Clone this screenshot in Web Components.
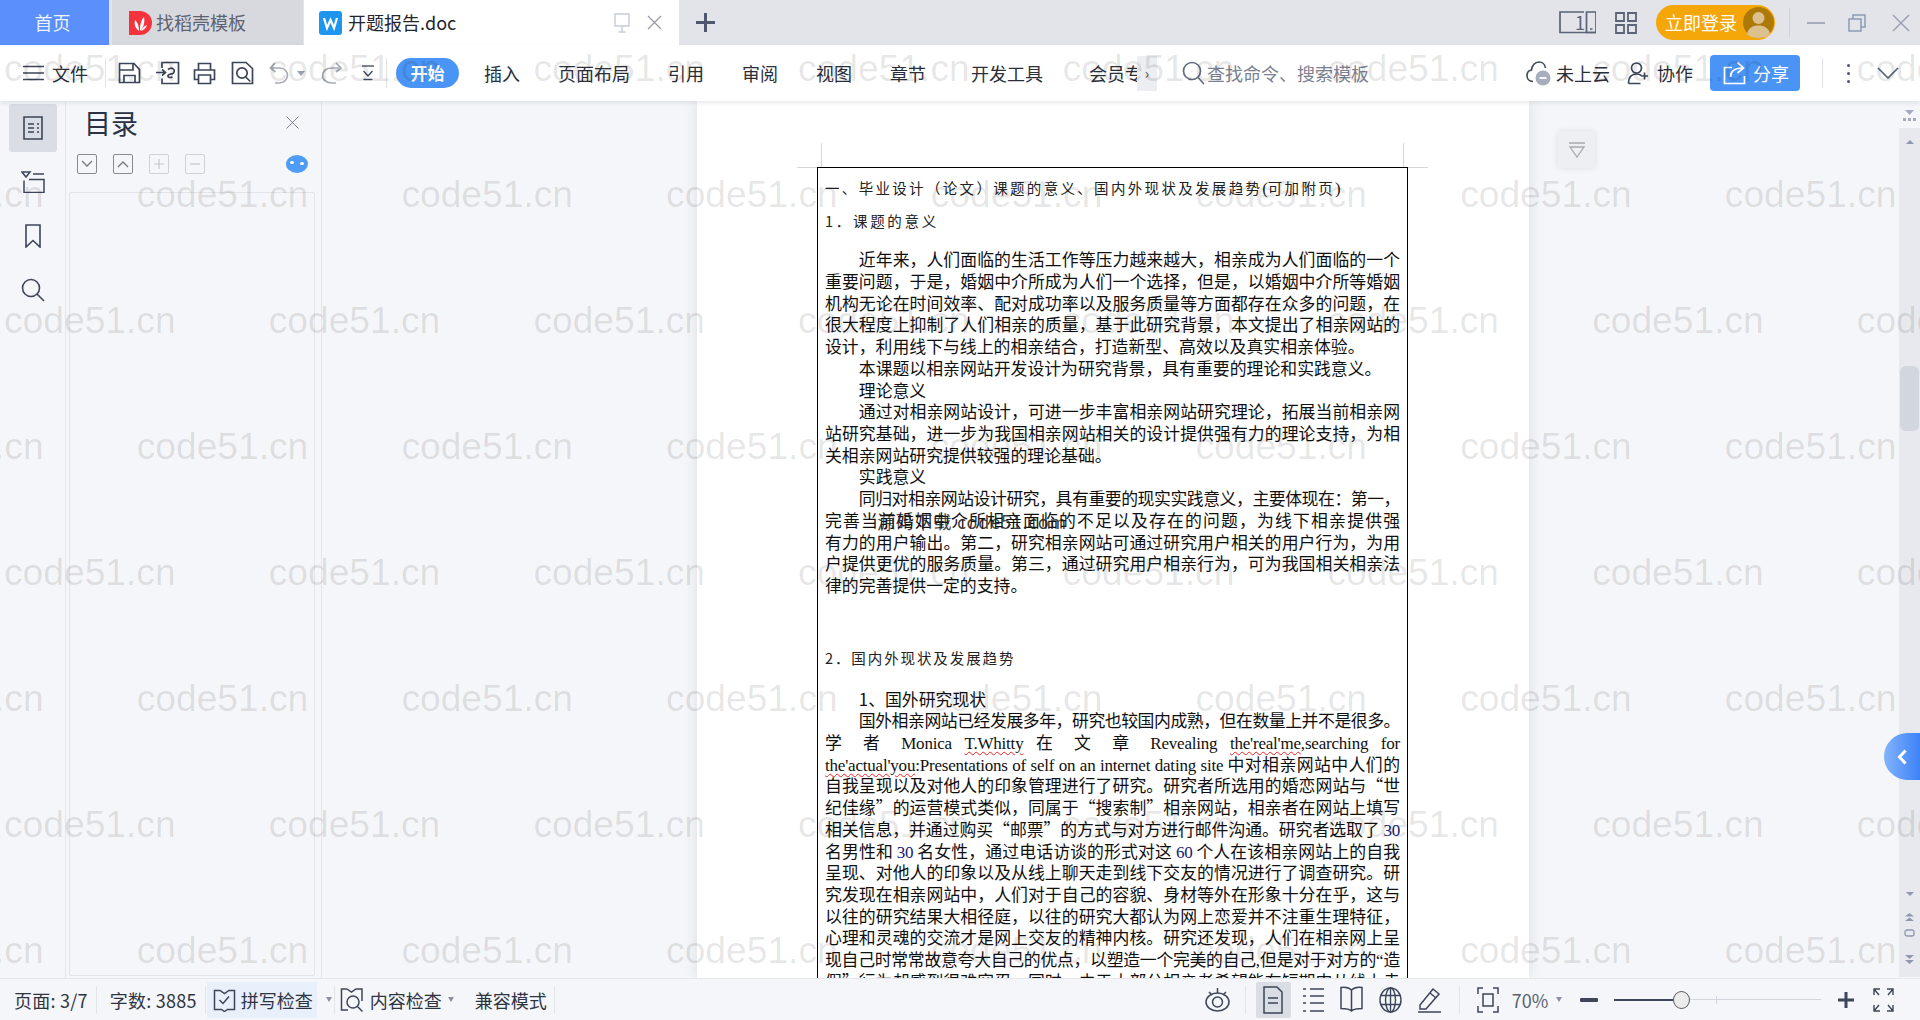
<!DOCTYPE html>
<html lang="zh-CN">
<head>
<meta charset="utf-8">
<title>开题报告.doc</title>
<style>
  html, body { margin: 0; height: 100%; }
  body {
    position: relative;
    width: 1920px;
    height: 1020px;
    overflow: hidden;
    display: flex;
    flex-direction: column;
    font-family: "Noto Sans CJK SC", "Noto Sans", sans-serif;
    color: #2b2f3a;
    background: #f5f6f9;
  }
</style>
</head>
<body>
<wps-titlebar></wps-titlebar>
<wps-ribbon></wps-ribbon>
<wps-main></wps-main>
<wps-status></wps-status>
<wps-watermark></wps-watermark>

<script>
const INK = "#3c4559";

// every icon is drawn in a box of its real size, w and h are taken from there
const ICONS = {
  save: [23, 24, `<path d="M1.5 2.5h14.5l5.500 6v13h-20z"/><path d="M1.500 9h13.500V2.500"/><path d="M6 21.500v-7h11v7"/>`],
  importDoc: [24, 24, `<path d="M6 7V1.500h16.500v21H6v-5"/><path d="M0 11.500h9M6 8.500l3.500 3-3.500 3"/><path d="M12 8.500c4-3.500 8 .5 5.500 3.500-1.500 1.800-5 .5-5.500 2.500-.5 2 2.500 2.500 4.500 1.500"/>`],
  print: [23, 23, `<path d="M5.500 8V1.500h12V8"/><path d="M5.500 17.500h-4V8h20v9.500h-4"/><path d="M5.500 13h12v8.500h-12z"/>`],
  preview: [23, 24, `<path d="M1.500 1.500h13.500l6.500 6v15h-20z"/><circle cx="11" cy="12" r="5.200"/><path d="M14.800 16l4.500 4.500"/>`],
  undo: [20, 24, `<path d="M6 2L1.500 7l5 4" stroke="#a8acb4"/><path d="M2 7h9c5 0 7.500 4 7.500 7.500S15 22 10 22H6" stroke="#a8acb4"/>`],
  redo: [22, 24, `<path d="M15 2l5 5-5 4" stroke="#a8acb4"/><path d="M20 7h-9C5 7 1.500 10.500 1.500 14.500S5 22 11 22h4" stroke="#a8acb4"/>`],
  more: [14, 18, `<path d="M1 2h12" stroke-width="1.300"/><path d="M2.500 7L7 12l4.500-5M2.500 15.500h9" stroke-width="1.300"/>`],
  menu: [21, 16, `<path d="M0 1.500h21M0 8h21M0 14.500h21" stroke-width="1.600"/>`],
  search: [23, 24, `<circle cx="10" cy="10" r="8.500" stroke="#656c7c"/><path d="M16 16.500l6 6.500" stroke="#656c7c"/>`],
  cloud: [25, 26, `<path d="M7 21.500C3 21.500 1 18.500 1 15.500c0-3 2-5 4.500-5.500C6 5.500 9 2 13 2c3 0 6 2.200 6.500 6" stroke-width="1.600"/><circle cx="17" cy="18" r="7.500" fill="#a6adbc" stroke="none"/><path d="M13.500 18h7" stroke="#fff" stroke-width="1.800"/>`],
  collab: [22, 24, `<circle cx="9.500" cy="7" r="5"/><path d="M1.500 22.500c0-6 3-9.500 8-9.500 2 0 3.500.5 4.800 1.500M1.500 22.500h12"/><path d="M17.500 11.500v7M14 15h7"/>`],
  share: [24, 24, `<path d="M9 6.500H1.500v16h20V15" stroke="#fff"/><path d="M7.500 16c0-5.500 4-9 12-9M14.500 1.500l6 5.500-6 5" stroke="#fff"/>`],
  chevron: [22, 12, `<path d="M1 1l10 10L21 1" stroke="#5b6271"/>`],
  device: [37, 23, `<path d="M25 1H1v20.500h36" /><path d="M27.500 1H37v20.500H27.500zM31 18h2.500"/>`],
  grid: [22, 22, `<path d="M1 1h8v8H1zM13 1h8v8h-8zM1 13h8v8H1zM13 13h8v8h-8z" stroke-width="1.800" stroke="#5a6377"/>`],
  minimize: [18, 2, `<path d="M0 1h18" stroke="#9aa1b4"/>`],
  restore: [18, 18, `<path d="M5 5V1h12v12h-4M1 5h12v12H1z" stroke="#8e9ab5" stroke-width="1.500"/>`],
  close: [20, 18, `<path d="M2 1l16 16M18 1L2 17" stroke="#9aa1b4" stroke-width="1.500"/>`],
  pin: [16, 20, `<path d="M1 1h14v12H1zM8 13v6M4.500 19h7" stroke="#c6cadb" stroke-width="1.400"/>`],
  tabClose: [15, 15, `<path d="M1 1l13 13M14 1L1 14" stroke="#959aa6" stroke-width="1.200"/>`],
  plus: [19, 19, `<path d="M9.500 0v19M0 9.500h19" stroke="#50586f" stroke-width="3"/>`],
  toc: [20, 24, `<path d="M1 1h18v22H1z" stroke-width="1.600"/><path d="M5 8h6M14 8h2M5 12h6M14 12h2M5 16h6M14 16h2" stroke-width="1.600"/>`],
  outline: [24, 22, `<path d="M1 1h8L5 6zM12 3h11M3 9.500v12h20V8.500H8" stroke-width="1.500"/>`],
  bookmark: [16, 24, `<path d="M1 1h14v22l-7-6.500L1 23z" stroke-width="1.600"/>`],
  find: [24, 24, `<circle cx="10" cy="10" r="8.500" stroke-width="1.600"/><path d="M16 16l7 7" stroke-width="1.600"/>`],
  panelClose: [13, 13, `<path d="M.5.5l12 12M12.500.5l-12 12" stroke="#5b6271" stroke-width=".8"/>`],
  spell: [23, 24, `<path d="M7 2.500H1.500v19h7l3 2 3-2h7v-19H16l-4.500 3z" stroke-width="1.500"/><path d="M6.500 12l3.500 3.500 6-7" stroke-width="1.500"/>`],
  content: [23, 26, `<path d="M7 2H1.500v21H8M22 14V2h-6l-4.500 3L7 2" stroke-width="1.500"/><circle cx="13" cy="15" r="6" stroke-width="1.500"/><path d="M17.500 19.500l5 5" stroke-width="1.500"/>`],
  eye: [25, 26, `<ellipse cx="12.500" cy="15" rx="11.500" ry="9" stroke-width="1.500"/><circle cx="12.500" cy="15" r="5" stroke-width="1.500"/><path d="M4 5l3 3M12.500 1v5M21 5l-3 3" stroke-width="1.500"/>`],
  page: [20, 28, `<path d="M1 1h13l5 5v21H1z" stroke-width="1.500"/><path d="M5 12h10M5 17h10" stroke-width="1.500"/>`],
  list: [21, 26, `<path d="M0 2h3M7 2h14M0 9h3M7 9h14M0 16h3M7 16h14M0 24h3M7 24h14" stroke-width="1.500"/>`],
  book: [23, 28, `<path d="M11.500 4C9 1.500 4 1 1 1.500v21c3 0 8 0 10.500 2.500 2.500-2.500 7.500-2.500 10.500-2.500v-21c-3-.5-8 0-10.500 2.500zM11.500 4v21" stroke-width="1.500"/>`],
  globe: [23, 26, `<ellipse cx="11.500" cy="13" rx="10.500" ry="12" stroke-width="1.400"/><ellipse cx="11.500" cy="13" rx="5" ry="12" stroke-width="1.400"/><path d="M11.500 1v24M1.500 8.500h20M1.500 17.500h20" stroke-width="1.400"/>`],
  pen: [23, 26, `<path d="M2 18L15 2l6 5L8 22H2z" stroke-width="1.500"/><path d="M12 6l6 5M0 25h23" stroke-width="1.500"/>`],
  fit: [22, 26, `<path d="M1 7V1h5M16 1h5v6M21 19v6h-5M6 25H1v-6" stroke-width="1.500"/><path d="M6 7h10v12H6z" stroke-width="1.500"/>`],
  fullscreen: [21, 24, `<path d="M1 7V1h6M1 1l5 6M14 1h6v6M20 1l-5 6M1 17v6h6M1 23l5-6M14 23h6v-6M20 23l-5-6" stroke-width="1.400"/>`],
};

function icon(name, color = INK) {
  const [w, h, body] = ICONS[name];
  return `<svg width="${w}" height="${h}" viewBox="0 0 ${w} ${h}" fill="none" stroke="${color}" stroke-width="1.700" style="display:block;flex:none">${body}</svg>`;
}

class WpsTitlebar extends HTMLElement {
  constructor() {
    super();
    this.attachShadow({ mode: "open" }).innerHTML = `
      <style>
        :host { display: flex; flex: none; height: 45px; background: #e3e4e9; font-size: 18px; line-height: 45px; }
        .tab { display: flex; align-items: center; box-sizing: border-box; height: 45px; }
        .home { width: 109px; justify-content: center; background: #5b8ffb; color: #eef3ff; padding-right: 4px; }
        .stock { width: 191px; margin-left: 3px; padding-left: 17px; gap: 4px; background: #d8d9de; color: #5d6270; }
        .doc { width: 375px; margin-left: 1px; padding-left: 15px; background: #fff; color: #23262e; }
        .doc .name { margin-left: 6px; }
        .doc .pin { margin-left: auto; }
        .doc .x { margin: 0 17px 0 17px; }
        .add { margin-left: 17px; display: flex; align-items: center; }
        .right { margin-left: auto; display: flex; align-items: center; }
        .device { position: relative; }
        .device b { position: absolute; left: 16px; top: 2px; font: 400 18px/18px "Noto Sans CJK SC", sans-serif; color: #5a6377; }
        .login {
          display: flex; align-items: center; box-sizing: border-box;
          width: 119px; height: 35px; margin-left: 19px; padding: 0 1px 0 9px;
          border-radius: 18px; background: #f5a609; color: #fff; font-size: 18px;
        }
        .login svg { margin-left: auto; }
        .sep { width: 1px; height: 29px; margin-left: 14px; background: #d0d2d8; }
      </style>
      <div class="tab home">首页</div>
      <div class="tab stock">
        <svg width="23" height="24" viewBox="0 0 23 24" style="flex:none"><path d="M0 0h11a12 12 0 0 1 0 24H0z" fill="#f4333c"/><path d="M10 20C6 17 5 13 6 9c2 2 4 5 4 11zM11 20c0-6 1-11 4-14 1 5 0 10-4 14zM12 20c1-3 3-5 6-6-1 3-3 5-6 6z" fill="#fff"/></svg>
        <span>找稻壳模板</span>
      </div>
      <div class="tab doc">
        <svg width="23" height="24" viewBox="0 0 23 24" style="flex:none"><rect width="23" height="24" rx="3" fill="#1e96f0"/><path d="M5 7l3 10 3.500-8 3.500 8 3-10" fill="none" stroke="#fff" stroke-width="2.200"/></svg>
        <span class="name">开题报告.doc</span>
        <span class="pin">${icon("pin")}</span>
        <span class="x">${icon("tabClose")}</span>
      </div>
      <div class="add">${icon("plus")}</div>
      <div class="right">
        <span class="device">${icon("device", "#5a6377")}<b>1</b></span>
        <span style="margin-left:19px">${icon("grid")}</span>
        <div class="login">
          <span>立即登录</span>
          <svg width="31" height="31" viewBox="0 0 31 31"><circle cx="15.500" cy="15.500" r="15.500" fill="#ad7a08"/><circle cx="15.500" cy="11" r="6" fill="#dcc08e"/><path d="M4 27c1-6 6-8.500 11.500-8.500S26 21 27 27c-3 3-7 4-11.500 4S7 30 4 27z" fill="#dcc08e"/></svg>
        </div>
        <span class="sep"></span>
        <span style="margin-left:17px">${icon("minimize")}</span>
        <span style="margin-left:23px">${icon("restore")}</span>
        <span style="margin:0 9px 0 25px">${icon("close")}</span>
      </div>`;
  }
}
customElements.define("wps-titlebar", WpsTitlebar);

class WpsRibbon extends HTMLElement {
  constructor() {
    super();
    const tabs = ["插入", "页面布局", "引用", "审阅", "视图", "章节"];
    this.attachShadow({ mode: "open" }).innerHTML = `
      <style>
        :host {
          display: flex; flex: none; align-items: center; height: 56px; position: relative; z-index: 2;
          background: #fff; color: #2b2f3a; font-size: 18px; box-shadow: 0 2px 5px rgba(0,0,0,.09);
        }
        .group { display: flex; align-items: center; }
        .sep { width: 1px; height: 30px; background: #e1e3e8; flex: none; }
        .caret { width: 0; height: 0; border: 4px solid transparent; border-top: 5px solid #9aa1ae; border-bottom: 0; margin-left: 8px; flex: none; }
        .start {
          width: 63px; height: 30px; margin-left: 9px; border-radius: 15px; background: #4a94f6;
          color: #fff; font-weight: 700; text-align: center; line-height: 29px; font-size: 17px; flex: none;
        }
        .tabs { gap: 38px; margin-left: 25px; white-space: nowrap; }
        .vip { width: 48px; overflow: hidden; white-space: nowrap; margin-left: 46px; }
        .strip { width: 20px; height: 35px; background: #eceef2; text-align: center; line-height: 33px; color: #555; flex: none; font-size: 15px; }
        .hint { color: #7b8191; margin-left: 2px; white-space: nowrap; }
        .share {
          display: flex; align-items: center; gap: 6px; box-sizing: border-box; width: 90px; height: 36px;
          margin-left: 17px; padding-left: 13px; border-radius: 4px; background: #4a94f6; color: #fff;
        }
        .dots { display: flex; flex-direction: column; gap: 5px; margin-left: 24px; }
        .dots i { width: 3px; height: 3px; border-radius: 50%; background: #4c5364; }
      </style>
      <span class="group" style="margin-left:23px">${icon("menu")}</span>
      <span style="margin-left:8px">文件</span>
      <span class="sep" style="margin-left:17px"></span>
      <span class="group" style="margin-left:12px;gap:15px">
        ${icon("save")}${icon("importDoc")}<span style="margin-left:-2px">${icon("print")}</span>${icon("preview")}
      </span>
      <span class="group" style="margin-left:15px">${icon("undo")}<i class="caret"></i></span>
      <span class="group" style="margin-left:16px">${icon("redo")}</span>
      <span class="group" style="margin-left:18px">${icon("more")}</span>
      <span class="sep" style="margin-left:11px"></span>
      <span class="start">开始</span>
      <span class="group tabs">
        ${tabs.map(t => `<span>${t}</span>`).join("")}
        <span style="margin-left:7px">开发工具</span>
      </span>
      <span class="vip">会员专享</span>
      <span class="strip">›</span>
      <span class="group" style="margin-left:25px">${icon("search")}</span>
      <span class="hint">查找命令、搜索模板</span>
      <span class="group" style="margin-left:157px">${icon("cloud")}</span>
      <span style="margin-left:5px;white-space:nowrap">未上云</span>
      <span class="group" style="margin-left:17px">${icon("collab")}</span>
      <span style="margin-left:8px">协作</span>
      <span class="share">${icon("share")}<span>分享</span></span>
      <span class="sep" style="margin-left:22px"></span>
      <span class="dots"><i></i><i></i><i></i></span>
      <span class="group" style="margin-left:27px">${icon("chevron")}</span>`;
  }
}
customElements.define("wps-ribbon", WpsRibbon);

class WpsSidebar extends HTMLElement {
  constructor() {
    super();
    this.attachShadow({ mode: "open" }).innerHTML = `
      <style>
        :host { display: flex; flex: none; height: 100%; background: #f5f6f9; }
        .rail { width: 65px; border-right: 1px solid #e4e6ea; display: flex; flex-direction: column; align-items: center; padding-top: 3px; }
        .rail span { display: flex; align-items: center; justify-content: center; width: 48px; height: 48px; margin-bottom: 6px; border-radius: 3px; }
        .rail span.on { background: #dadde3; }
        .panel { box-sizing: border-box; width: 256px; border-right: 1px solid #e4e6ea; padding: 0 6px 0 3px; display: flex; flex-direction: column; }
        .head { display: flex; align-items: center; justify-content: space-between; height: 47px; padding: 0 16px 4px 15px; box-sizing: border-box; }
        h1 { margin: 0; font-size: 27px; font-weight: 400; color: #2b3245; line-height: 40px; }
        .tools { display: flex; align-items: center; gap: 16px; height: 20px; margin: 6px 0 0 8px; }
        .tools b { box-sizing: border-box; width: 20px; height: 20px; border: 1.500px solid #8a8a8a; border-radius: 2px; display: flex; align-items: center; justify-content: center; }
        .tools b.off { border-color: #d0d1d4; }
        .pill { margin-left: 65px; width: 22px; height: 18px; border-radius: 50%; background: #4d9cf5; position: relative; }
        .pill::before, .pill::after { content: ""; position: absolute; top: 6px; width: 4px; height: 3px; background: #fff; border-radius: 50%; }
        .pill::before { left: 4px; }
        .pill::after { right: 4px; top: 7px; }
        .list { flex: 1; margin: 18px 0 2px; border: 1px solid #e3e5e9; border-radius: 2px; }
      </style>
      <div class="rail">
        <span class="on">${icon("toc")}</span>
        ${`<span>${icon("outline")}</span><span>${icon("bookmark")}</span><span>${icon("find")}</span>`}
      </div>
      <div class="panel">
        <div class="head"><h1>目录</h1>${icon("panelClose")}</div>
        <div class="tools">
          <b><svg width="12" height="8" viewBox="0 0 12 8" fill="none" stroke="#777" stroke-width="1.300"><path d="M1 1l5 5 5-5"/></svg></b>
          <b><svg width="12" height="8" viewBox="0 0 12 8" fill="none" stroke="#777" stroke-width="1.300"><path d="M1 7l5-5 5 5"/></svg></b>
          <b class="off"><svg width="10" height="10" viewBox="0 0 10 10" fill="none" stroke="#c6c7ca" stroke-width="1.200"><path d="M5 0v10M0 5h10"/></svg></b>
          <b class="off"><svg width="10" height="10" viewBox="0 0 10 10" fill="none" stroke="#c6c7ca" stroke-width="1.200"><path d="M0 5h10"/></svg></b>
          <i class="pill"></i>
        </div>
        <div class="list"></div>
      </div>`;
  }
}
customElements.define("wps-sidebar", WpsSidebar);

class WpsDocument extends HTMLElement {
  get firstPart() {
    return [
      ["ij", "近年来，人们面临的生活工作等压力越来越大，相亲成为人们面临的一个"],
      ["j", "重要问题，于是，婚姻中介所成为人们一个选择，但是，以婚姻中介所等婚姻"],
      ["j", "机构无论在时间效率、配对成功率以及服务质量等方面都存在众多的问题，在"],
      ["j", "很大程度上抑制了人们相亲的质量，基于此研究背景，本文提出了相亲网站的"],
      ["", "设计，利用线下与线上的相亲结合，打造新型、高效以及真实相亲体验。"],
      ["i", "本课题以相亲网站开发设计为研究背景，具有重要的理论和实践意义。"],
      ["i", "理论意义"],
      ["ij", "通过对相亲网站设计，可进一步丰富相亲网站研究理论，拓展当前相亲网"],
      ["j", "站研究基础，进一步为我国相亲网站相关的设计提供强有力的理论支持，为相"],
      ["", "关相亲网站研究提供较强的理论基础。"],
      ["i", "实践意义"],
      ["ijt", "同归对相亲网站设计研究，具有重要的现实实践意义，主要体现在：第一，"],
      ["j", "完善当前婚姻中介所相亲面临的不足以及存在的问题，为线下相亲提供强"],
      ["j", "有力的用户输出。第二，研究相亲网站可通过研究用户相关的用户行为，为用"],
      ["j", "户提供更优的服务质量。第三，通过研究用户相亲行为，可为我国相关相亲法"],
      ["", "律的完善提供一定的支持。"],
    ];
  }

  get secondPart() {
    const lat = t => `<span class="lat">${t}</span>`;
    const typo = t => `<span class="lat typo">${t}</span>`;
    const num = t => `<span class="lat num">${t}</span>`;
    return [
      ["i", "1、国外研究现状"],
      ["ijt", "国外相亲网站已经发展多年，研究也较国内成熟，但在数量上并不是很多。"],
      ["j", `学 者 ${lat("Monica")} ${typo("T.Whitty")} 在 文 章 ${lat("Revealing")} ${typo("the'real'me")}${lat(",searching")} ${lat("for")}`],
      ["j", `${typo("the'actual'you")}${lat(":Presentations of self on an internet dating site")} 中对相亲网站中人们的`],
      ["j", "自我呈现以及对他人的印象管理进行了研究。研究者所选用的婚恋网站与“世"],
      ["j", "纪佳缘”的运营模式类似，同属于“搜索制”相亲网站，相亲者在网站上填写"],
      ["ju", `相关信息，并通过购买“邮票”的方式与对方进行邮件沟通。研究者选取了 ${num("30")}`],
      ["j", `名男性和 ${num("30")} 名女性，通过电话访谈的形式对这 ${num("60")} 个人在该相亲网站上的自我`],
      ["j", "呈现、对他人的印象以及从线上聊天走到线下交友的情况进行了调查研究。研"],
      ["j", "究发现在相亲网站中，人们对于自己的容貌、身材等外在形象十分在乎，这与"],
      ["j", "以往的研究结果大相径庭，以往的研究大都认为网上恋爱并不注重生理特征，"],
      ["j", "心理和灵魂的交流才是网上交友的精神内核。研究还发现，人们在相亲网上呈"],
      ["jt", `现自己时常常故意夸大自己的优点，以塑造一个完美的自己${lat(",")}但是对于对方的${lat("“")}造`],
      ["j", "假”行为却感到很难容忍。同时，由于大部分相亲者希望能在短期内从线上走"],
    ];
  }

  lines(list) {
    return list.map(([cls, text]) => `<div class="l ${[...cls].join(" ")}">${text}</div>`).join("");
  }

  constructor() {
    super();
    this.attachShadow({ mode: "open" }).innerHTML = `
      <style>
        :host {
          display: block; flex: none; box-sizing: border-box; position: relative;
          width: 832px; height: 100%; margin-left: 375px; padding: 66px 0 0 120px;
          background: #fff; box-shadow: 0 0 14px rgba(0,0,0,.1); overflow: hidden;
          color: #101010;
        }
        .mark { position: absolute; background: #d6d6d6; }
        .box { box-sizing: border-box; width: 591px; height: 1200px; border: 1px solid #000; padding: 9px 7px 0 7px; }
        .head { font-size: 14.500px; letter-spacing: 2.700px; line-height: 22px; white-space: nowrap; color: #222; }
        .head.first { letter-spacing: 2.320px; }
        .head.second { letter-spacing: 1.900px; }
        .l { font-size: 16.880px; line-height: 21.720px; height: 21.720px; white-space: nowrap; width: 575px; }
        .i { text-indent: 33.800px; }
        .j { text-align: justify; text-align-last: justify; }
        .t { letter-spacing: -.460px; }
        .u { letter-spacing: -.120px; }
        .lat { font-family: "Liberation Serif", serif; font-size: 17px; letter-spacing: -.200px; }
        .num { color: #14206e; }
        .typo { text-decoration: underline wavy #e22; text-decoration-thickness: 1px; text-underline-offset: 2px; }
        .stamp {
          position: absolute; left: 180px; top: 408px; font-size: 18px; line-height: 24px;
          letter-spacing: .800px; color: rgba(30,30,30,.85); white-space: nowrap;
        }
      </style>
      <i class="mark" style="left:124px;top:42px;width:1px;height:24px"></i>
      <i class="mark" style="left:706px;top:42px;width:1px;height:24px"></i>
      <i class="mark" style="left:100px;top:66px;width:20px;height:1px"></i>
      <i class="mark" style="left:711px;top:66px;width:20px;height:1px"></i>
      <div class="box">
        <div class="head first">一、毕业设计（论文）课题的意义、国内外现状及发展趋势<span class="lat">(</span>可加附页<span class="lat">)</span></div>
        <div class="head" style="margin-top:9.500px">1．课题的意义</div>
        <div style="margin-top:16.800px">${this.lines(this.firstPart)}</div>
        <div class="head second" style="margin-top:51.400px">2．国内外现状及发展趋势</div>
        <div style="margin-top:18.400px">${this.lines(this.secondPart)}</div>
      </div>
      <div class="stamp">源码下载 code51.com</div>`;
  }
}
customElements.define("wps-document", WpsDocument);

class WpsScrollbar extends HTMLElement {
  constructor() {
    super();
    this.attachShadow({ mode: "open" }).innerHTML = `
      <style>
        :host { display: flex; flex-direction: column; flex: none; box-sizing: border-box; width: 21px; height: 100%; margin-left: auto; position: relative; }
        .top { height: 27px; display: flex; align-items: flex-end; justify-content: center; padding-bottom: 5px; box-sizing: border-box; }
        .track { flex: 1; margin-bottom: 1px; background: #e8e9ee; display: flex; flex-direction: column; align-items: center; }
        .thumb { box-sizing: border-box; width: 19px; height: 65px; margin-top: 222px; border-radius: 6px; background: #d2d6dd; }
        .foot { margin-top: auto; display: flex; flex-direction: column; align-items: center; margin-bottom: 12px; }
        .arrow { width: 0; height: 0; border: 4px solid transparent; }
        .up { border-bottom: 4px solid #8f98ad; border-top: 0; }
        .down { border-top: 4px solid #8f98ad; border-bottom: 0; }
        .pull {
          position: absolute; right: 0; top: 632px; width: 36px; height: 47px; border-radius: 24px 0 0 24px;
          background: linear-gradient(90deg, #82b3fb, #3d82f8); display: flex; align-items: center; justify-content: center;
        }
      </style>
      <div class="top"><svg width="13" height="13" viewBox="0 0 13 13" fill="#a3abbd"><path d="M2 0h9L6.500 5zM0 8h3v3H0zM5 8h3v3H5zM10 8h3v3h-3z"/></svg></div>
      <div class="track">
        <i class="arrow up" style="margin-top:12px"></i>
        <div class="thumb"></div>
        <div class="foot">
          <i class="arrow down"></i>
          <svg style="margin-top:17px" width="11" height="9" viewBox="0 0 11 9" fill="#8f98ad"><path d="M5.500 0L10 3.500H1zM5.500 4.500L10 8H1z"/></svg>
          <svg style="margin-top:7px" width="11" height="8" viewBox="0 0 11 8" fill="none" stroke="#8f98ad" stroke-width="1.300"><rect x="1" y="1" width="9" height="6" rx="2"/></svg>
          <svg style="margin-top:18px" width="11" height="10" viewBox="0 0 11 10" fill="#8f98ad"><path d="M1 0h9L5.500 4zM1 5h9L5.500 9z"/></svg>
        </div>
      </div>
      <div class="pull"><svg width="10" height="16" viewBox="0 0 10 16" fill="none" stroke="#fff" stroke-width="3"><path d="M8.500 1.500L2.500 8l6 6.500"/></svg></div>`;
  }
}
customElements.define("wps-scrollbar", WpsScrollbar);

class WpsMain extends HTMLElement {
  constructor() {
    super();
    this.attachShadow({ mode: "open" }).innerHTML = `
      <style>
        :host { display: flex; flex: 1; min-height: 0; background: #f5f6f9; overflow: hidden; }
        .nav {
          box-sizing: border-box; flex: none; width: 37px; height: 37px; margin: 30px 0 0 29px;
          background: #eeeff2; box-shadow: 0 0 6px rgba(0,0,0,.1); border-radius: 2px;
          display: flex; align-items: center; justify-content: center;
        }
      </style>
      <wps-sidebar></wps-sidebar>
      <wps-document></wps-document>
      <div class="nav"><svg width="18" height="16" viewBox="0 0 18 16" fill="none" stroke="#a7a9ae" stroke-width="1.300"><path d="M1 1h16M2 5h14L9 15z"/></svg></div>
      <wps-scrollbar></wps-scrollbar>`;
  }
}
customElements.define("wps-main", WpsMain);

class WpsStatus extends HTMLElement {
  constructor() {
    super();
    this.attachShadow({ mode: "open" }).innerHTML = `
      <style>
        :host {
          display: flex; flex: none; align-items: center; box-sizing: border-box; height: 42px;
          border-top: 1px solid #e6e7eb; background: #f5f6f9; color: #2f3442; font-size: 18px; white-space: nowrap;
        }
        .sep { width: 1px; height: 28px; background: #e3e5e9; flex: none; }
        .cell { display: flex; align-items: center; height: 36px; box-sizing: border-box; }
        .spell { width: 110px; margin-left: 1px; padding-left: 6px; gap: 5px; background: #e8f0fb; }
        .caret { width: 0; height: 0; border: 3.500px solid transparent; border-top: 5px solid #8a90a0; border-bottom: 0; margin-left: 8px; flex: none; }
        .on { width: 35px; justify-content: center; background: #dadde3; border-radius: 2px; }
        .slider { display: flex; align-items: center; width: 207px; margin-left: 16px; height: 20px; position: relative; }
        .slider i { height: 2px; display: block; }
        .done { width: 59px; background: #3c4559; }
        .rest { flex: 1; background: #d4d7dd; height: 1px !important; }
        .knob {
          box-sizing: border-box; width: 17px; height: 18px; border: 1.500px solid #5a5a5a; border-radius: 50%;
          background: #ececec; flex: none;
        }
        .tick { position: absolute; left: 102px; top: 6px; width: 1px; height: 8px !important; background: #d4d7dd; }
      </style>
      <span style="margin-left:14px;letter-spacing:.25px">页面: 3/7</span>
      <span class="sep" style="margin-left:8px"></span>
      <span style="margin-left:13px;letter-spacing:.25px">字数: 3885</span>
      <span class="sep" style="margin-left:8px"></span>
      <span class="cell spell">${icon("spell")}<span>拼写检查</span><i class="caret"></i></span>
      <span class="sep" style="margin-left:17px"></span>
      <span class="cell" style="margin-left:5px;gap:7px">${icon("content")}<span>内容检查</span><i class="caret" style="margin-left:-1px"></i></span>
      <span style="margin-left:21px">兼容模式</span>
      <span class="sep" style="margin-left:7px"></span>

      <span style="margin-left:650px">${icon("eye")}</span>
      <span class="sep" style="margin-left:15px"></span>
      <span class="cell on" style="margin-left:10px">${icon("page")}</span>
      <span style="margin-left:12px">${icon("list")}</span>
      <span style="margin-left:16px">${icon("book")}</span>
      <span style="margin-left:16px">${icon("globe")}</span>
      <span style="margin-left:16px">${icon("pen")}</span>
      <span class="sep" style="margin-left:18px"></span>
      <span style="margin-left:17px">${icon("fit")}</span>
      <span style="margin-left:13px;color:#5a6272">70%</span>
      <i class="caret"></i>
      <svg style="margin-left:18px;flex:none" width="18" height="4"><rect width="18" height="4" rx="1" fill="#3c4559"/></svg>
      <span class="slider"><i class="done"></i><span class="knob"></span><i class="rest"></i><i class="tick"></i></span>
      <svg style="margin-left:17px;flex:none" width="16" height="16" viewBox="0 0 16 16" fill="none" stroke="#3c4559" stroke-width="3"><path d="M8 0v16M0 8h16"/></svg>
      <span style="margin-left:19px">${icon("fullscreen")}</span>`;
  }
}
customElements.define("wps-status", WpsStatus);

// tiled stamp that lies over the window, from the ribbon down to the status bar
class WpsWatermark extends HTMLElement {
  constructor() {
    super();
    let rows = "";
    for (let r = 0; r < 8; r++) {
      const lead = r % 2 === 0 ? 4 : -128;
      rows += `<div class="row" style="margin-left:${lead}px">${"<span>code51.cn</span>".repeat(9)}</div>`;
    }
    this.attachShadow({ mode: "open" }).innerHTML = `
      <style>
        :host { position: absolute; left: 0; top: 45px; right: 0; bottom: 42px; overflow: hidden; pointer-events: none; z-index: 5; }
        .rows { display: grid; grid-auto-rows: 126px; margin-top: -39px; }
        .row { display: flex; align-items: center; }
        span {
          flex: none; width: 264.700px; font: 400 37.200px/1 "Liberation Sans", sans-serif;
          color: rgba(0,0,0,.1); white-space: nowrap;
        }
      </style>
      <div class="rows">${rows}</div>`;
  }
}
customElements.define("wps-watermark", WpsWatermark);
</script>
</body>
</html>
